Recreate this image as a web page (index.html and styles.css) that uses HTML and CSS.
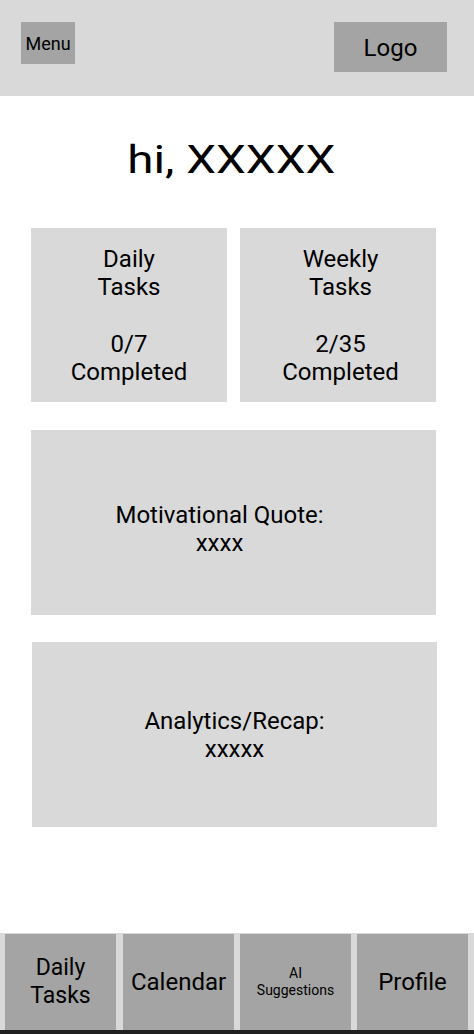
FILE: index.html
```html
<!DOCTYPE html>
<html lang="en">
<head>
<meta charset="utf-8">
<title>Home</title>
<link rel="stylesheet" href="styles.css">
</head>
<body>
<div class="app">
  <header class="topbar">
    <div class="menu-btn">Menu</div>
    <div class="logo">Logo</div>
  </header>

  <main class="content">
    <h1 class="greeting"><span class="greeting-text">hi, XXXXX</span></h1>

    <section class="stats">
      <div class="stat-card">
        <div>Daily<br>Tasks</div>
        <div class="spacer">&nbsp;</div>
        <div>0/7<br>Completed</div>
      </div>
      <div class="stat-card stat-card-weekly">
        <div>Weekly<br>Tasks</div>
        <div class="spacer">&nbsp;</div>
        <div>2/35<br>Completed</div>
      </div>
    </section>

    <section class="panel panel-quote">
      <div>Motivational Quote:<br>xxxx</div>
    </section>

    <section class="panel panel-analytics">
      <div>Analytics/Recap:<br>xxxxx</div>
    </section>
  </main>

  <nav class="bottom-nav">
    <div class="nav-item nav-daily">Daily<br>Tasks</div>
    <div class="nav-item nav-big">Calendar</div>
    <div class="nav-item nav-small">AI<br>Suggestions</div>
    <div class="nav-item nav-big">Profile</div>
  </nav>
  <div class="sys-bar"></div>
</div>
</body>
</html>
```

FILE: styles.css
```css
* {
  box-sizing: border-box;
}

html, body {
  margin: 0;
  padding: 0;
  background: #ffffff;
}

body {
  font-family: Roboto, "Liberation Sans", sans-serif;
  color: #000;
}

.app {
  width: 474px;
  height: 1034px;
  display: flex;
  flex-direction: column;
}

.topbar {
  height: 96px;
  background: #d9d9d9;
  display: flex;
  justify-content: space-between;
  align-items: flex-start;
  padding: 22px 27px 0 21px;
}

.menu-btn {
  width: 54px;
  height: 42px;
  background: #a4a4a4;
  font-size: 18px;
  display: flex;
  align-items: center;
  justify-content: center;
}

.logo {
  width: 113px;
  height: 50px;
  background: #a4a4a4;
  font-size: 24px;
  display: flex;
  align-items: center;
  justify-content: center;
  padding-top: 1px;
}

.content {
  flex: 1;
  display: flex;
  flex-direction: column;
  padding: 0 38px 0 31px;
}

.greeting {
  margin: 41px 0 0 0;
  padding-right: 5px;
  height: 91px;
  font-size: 39px;
  font-weight: 400;
  line-height: 46px;
  text-align: center;
}

.greeting-text {
  display: inline-block;
  transform: scaleX(1.22);
}

.stats {
  display: flex;
  gap: 13px;
}

.stat-card {
  width: 196px;
  height: 174px;
  background: #d9d9d9;
  display: flex;
  flex-direction: column;
  justify-content: center;
  align-items: center;
  text-align: center;
  font-size: 24px;
  line-height: 28px;
  padding-top: 1px;
}

.stat-card-weekly {
  padding-left: 5px;
}

.spacer {
  height: 29px;
}

.panel {
  height: 185px;
  background: #d9d9d9;
  display: flex;
  align-items: center;
  justify-content: center;
  text-align: center;
  font-size: 24px;
  line-height: 28px;
}

.panel-quote {
  margin-top: 28px;
  padding: 13px 28px 0 0;
}

.panel-analytics {
  margin-top: 27px;
  margin-left: 1px;
  margin-right: -1px;
}

.bottom-nav {
  height: 97px;
  background: #d9d9d9;
  display: flex;
  gap: 6px;
  padding: 1px 6px 0 5px;
}

.nav-item {
  width: 111px;
  background: #a4a4a4;
  display: flex;
  align-items: center;
  justify-content: center;
  text-align: center;
}

.nav-item:first-child {
  margin-right: 1px;
}

.nav-daily {
  font-size: 23px;
  line-height: 28px;
}

.nav-big {
  font-size: 24px;
}

.nav-small {
  font-size: 14px;
  line-height: 17px;
}

.sys-bar {
  height: 4px;
  background: #1f1f1f;
}
```
